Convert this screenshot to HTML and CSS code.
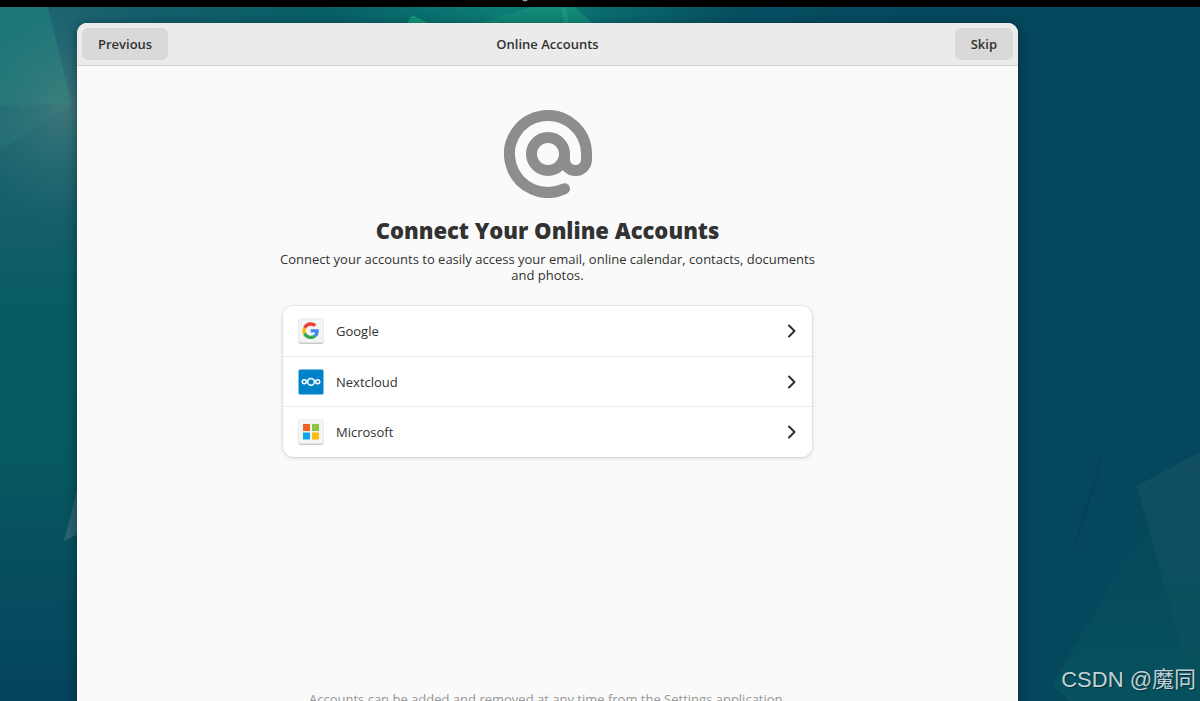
FILE: index.html
```
<!DOCTYPE html>
<html lang="en">
<head>
<meta charset="utf-8">
<title>Online Accounts</title>
<link rel="stylesheet" href="styles.css">
</head>

<body>
	<!-- desktop wallpaper -->
	<svg class="wallpaper" viewBox="0 0 1200 701" preserveAspectRatio="none" aria-hidden="true">
		<defs>
			<linearGradient id="base" x1="0" y1="0" x2="0" y2="1">
				<stop offset="0" stop-color="#1b6771"/>
				<stop offset="0.3" stop-color="#155f6b"/>
				<stop offset="0.45" stop-color="#075b65"/>
				<stop offset="0.65" stop-color="#075962"/>
				<stop offset="0.85" stop-color="#064c5f"/>
				<stop offset="1" stop-color="#05445c"/>
			</linearGradient>
			<linearGradient id="top" x1="0" y1="0" x2="1" y2="0">
				<stop offset="0" stop-color="#1b6070"/>
				<stop offset="0.3" stop-color="#075e67"/>
				<stop offset="0.5" stop-color="#0c7d76"/>
				<stop offset="0.6" stop-color="#0a6e70"/>
				<stop offset="0.75" stop-color="#065062"/>
				<stop offset="1" stop-color="#05475c"/>
			</linearGradient>
			<radialGradient id="glow" cx="70" cy="110" r="115" gradientUnits="userSpaceOnUse">
				<stop offset="0" stop-color="#5d8785" stop-opacity="0.55"/>
				<stop offset="1" stop-color="#3a7a7c" stop-opacity="0"/>
			</radialGradient>
			<linearGradient id="shard" x1="0" y1="0" x2="0" y2="1">
				<stop offset="0" stop-color="#124f62"/>
				<stop offset="1" stop-color="#07505e"/>
			</linearGradient>
			<linearGradient id="hill" x1="0" y1="0" x2="0" y2="1">
				<stop offset="0" stop-color="#05485c"/>
				<stop offset="1" stop-color="#06525f"/>
			</linearGradient>
		</defs>
		<rect width="600" height="701" fill="url(#base)"/>
		<rect x="600" width="600" height="701" fill="#05475d"/>
		<polygon points="46,0 960,0 960,60 72,105" fill="url(#top)"/>
		<polygon points="0,0 46,0 72,105 0,105" fill="#1c7677"/>
		<polygon points="0,105 72,105 0,150" fill="#1b6a72"/>
		<rect width="200" height="240" fill="url(#glow)"/>
		<polygon points="407,23 412,15 428,23" fill="#159579"/>
		<polygon points="480,23 530,7 575,7 592,23" fill="#118878"/>
		<polygon points="564,23 561,7 566,7 569,23" fill="#1b957f"/>
		<polygon points="64,541 78,487 78,534" fill="#2b6470"/>
		<polygon points="1112,424 1090,500 1062,592 1084,510" fill="#054259"/>
		<polygon points="1052,685 1143,530 1200,560 1200,701 1070,701" fill="url(#hill)"/>
		<polygon points="1137,486 1200,452 1200,701 1192,685" fill="url(#shard)"/>
	</svg>

	<div class="topbar">
		<svg class="clock-tail" viewBox="0 0 6 2" aria-hidden="true"><path d="M0.5 0 Q3 2 5.500 0" fill="none" stroke="#cccccc"/></svg>
	</div>

	<div class="window">
		<header class="headerbar">
			<button type="button" class="nav-btn">Previous</button>
			<h1 class="window-title">Online Accounts</h1>
			<button type="button" class="nav-btn">Skip</button>
		</header>

		<main class="page">
			<svg class="at-icon" viewBox="0 0 16 16" fill="none" stroke="#8d8d8d" stroke-width="2" stroke-linecap="round" aria-hidden="true">
				<circle cx="8" cy="8" r="3"/>
				<path d="M11 8v1a2 2 0 0 0 4 0v-1A7 7 0 1 0 11 14.320"/>
			</svg>
			<h2 class="title">Connect Your Online Accounts</h2>
			<p class="subtitle">Connect your accounts to easily access your email, online calendar, contacts, documents and photos.</p>

			<div class="accounts">
				<button type="button" class="account">
					<svg class="logo" viewBox="0 0 26 26" aria-hidden="true">
						<rect x="0.500" y="1" width="25" height="25" rx="2" fill="#c9c9c9"/>
						<rect x="0.500" y="0.500" width="25" height="24" rx="2" fill="#f4f4f4" stroke="#e6e6e6" stroke-width="0.500"/>
						<g transform="translate(4.300 4.300) scale(0.350)">
							<path fill="#ea4335" d="M24 9.500c3.540 0 6.710 1.220 9.210 3.600l6.850-6.850C35.900 2.380 30.470 0 24 0 14.620 0 6.510 5.380 2.560 13.220l7.980 6.190C12.430 13.720 17.740 9.500 24 9.500z"/>
							<path fill="#4285f4" d="M46.980 24.550c0-1.570-.15-3.090-.38-4.550H24v9.020h12.940c-.58 2.960-2.260 5.480-4.780 7.180l7.730 6c4.510-4.180 7.090-10.360 7.090-17.650z"/>
							<path fill="#fbbc05" d="M10.530 28.590c-.48-1.450-.76-2.990-.76-4.590s.27-3.140.76-4.590l-7.980-6.190C.92 16.460 0 20.120 0 24c0 3.880.92 7.540 2.560 10.780l7.970-6.190z"/>
							<path fill="#34a853" d="M24 48c6.480 0 11.930-2.130 15.890-5.810l-7.730-6c-2.150 1.450-4.920 2.300-8.160 2.300-6.260 0-11.570-4.220-13.470-9.910l-7.980 6.190C6.510 42.620 14.620 48 24 48z"/>
						</g>
					</svg>
					<span class="account-name">Google</span>
					<svg class="chevron" viewBox="0 0 10 14" aria-hidden="true"><path d="M2 1.500 7.500 7 2 12.500"/></svg>
				</button>
				<button type="button" class="account">
					<svg class="logo" viewBox="0 0 26 26" aria-hidden="true">
						<rect x="0.500" y="0.500" width="25" height="25" rx="1.500" fill="#0082c9"/>
						<g fill="none" stroke="#ffffff" stroke-width="1.500">
							<circle cx="13" cy="12.800" r="3.400"/>
							<circle cx="6.300" cy="12.800" r="2"/>
							<circle cx="19.700" cy="12.800" r="2"/>
						</g>
					</svg>
					<span class="account-name">Nextcloud</span>
					<svg class="chevron" viewBox="0 0 10 14" aria-hidden="true"><path d="M2 1.500 7.500 7 2 12.500"/></svg>
				</button>
				<button type="button" class="account">
					<svg class="logo" viewBox="0 0 26 26" aria-hidden="true">
						<rect x="0.500" y="1" width="25" height="25" rx="2" fill="#c9c9c9"/>
						<rect x="0.500" y="0.500" width="25" height="24" rx="2" fill="#f4f4f4" stroke="#e6e6e6" stroke-width="0.500"/>
						<rect x="5" y="5" width="7" height="7" fill="#ec6325"/>
						<rect x="14" y="5" width="7" height="7" fill="#8bc53f"/>
						<rect x="5" y="13.500" width="7" height="7" fill="#10a5e6"/>
						<rect x="14" y="13.500" width="7" height="7" fill="#fdbc12"/>
					</svg>
					<span class="account-name">Microsoft</span>
					<svg class="chevron" viewBox="0 0 10 14" aria-hidden="true"><path d="M2 1.500 7.500 7 2 12.500"/></svg>
				</button>
			</div>

			<p class="note">Accounts can be added and removed at any time from the Settings application.</p>
		</main>
	</div>

	<div class="watermark">CSDN @魔同</div>
</body>
</html>
```
FILE: styles.css
```
* {
	box-sizing: border-box;
}

body {
	margin: 0;
	height: 100vh;
	overflow: hidden;
	display: flex;
	flex-direction: column;
	position: relative;
	background-color: #05475d;
	font-family: "Open Sans", "Noto Sans", sans-serif;
	font-size: 13px;
	color: #323232;
}

.wallpaper {
	position: absolute;
	top: 0;
	left: 0;
	width: 100%;
	height: 100%;
	z-index: -1;
}

.topbar {
	flex: none;
	height: 7px;
	background-color: #000000;
	display: flex;
	justify-content: center;
	padding-right: 150px;
}

.clock-tail {
	width: 6px;
	height: 2px;
}

/* the window runs on below the bottom of the screen */
.window {
	flex: none;
	height: 100vh;
	margin: 16px 182px 0 77px;
	display: flex;
	flex-direction: column;
	background-color: #fafafa;
	border-radius: 10px;
	box-shadow: 0 2px 12px 1px rgba(0, 0, 0, 0.35);
	overflow: hidden;
}

.headerbar {
	flex: none;
	display: grid;
	grid-template-columns: 1fr auto 1fr;
	align-items: center;
	height: 43px;
	padding: 0 5px;
	background-color: #ebebeb;
	border-bottom: 1px solid #d5d5d5;
}

.window-title {
	margin: 0;
	font-size: 13px;
	font-weight: 600;
}

.nav-btn {
	justify-self: start;
	height: 32px;
	padding: 0 16px;
	border: none;
	border-radius: 6px;
	background-color: #d9d9d9;
	font-family: inherit;
	font-size: 13px;
	font-weight: 600;
	color: #323232;
}

.nav-btn:last-child {
	justify-self: end;
}

.nav-btn:hover {
	background-color: #cfcfcf;
}

.page {
	flex: 1;
	display: flex;
	flex-direction: column;
	align-items: center;
	padding: 44px 20px 17px;
}

.at-icon {
	flex: none;
	width: 88px;
	height: 88px;
}

.title {
	margin: 16px 0 5px;
	font-size: 22px;
	line-height: 32px;
	font-weight: 800;
}

.subtitle {
	max-width: 550px;
	margin: 0 0 23px;
	line-height: 16px;
	text-align: center;
}

.accounts {
	width: 100%;
	max-width: 529px;
	background-color: #ffffff;
	border-radius: 11px;
	box-shadow: 0 0 0 1px rgba(0, 0, 0, 0.04), 0 1px 4px rgba(0, 0, 0, 0.16);
	overflow: hidden;
}

.account {
	display: flex;
	align-items: center;
	gap: 12px;
	width: 100%;
	height: 50px;
	padding: 0 15px;
	border: none;
	border-bottom: 1px solid #ebebeb;
	background-color: #ffffff;
	font-family: inherit;
	font-size: 13px;
	color: #323232;
	text-align: left;
}

.account:first-child {
	height: 51px;
}

.account:last-child {
	border-bottom: none;
}

.account:hover {
	background-color: #f7f7f7;
}

.logo {
	flex: none;
	width: 26px;
	height: 26px;
}

.account-name {
	flex: 1;
}

.chevron {
	width: 10px;
	height: 14px;
	fill: none;
	stroke: #2e2e2e;
	stroke-width: 2;
	stroke-linecap: round;
	stroke-linejoin: round;
}

.note {
	margin: auto 0 0;
	line-height: 16px;
	color: #969696;
}

.watermark {
	position: absolute;
	right: 4px;
	bottom: 8px;
	font-family: "Liberation Sans", "Noto Sans CJK SC", sans-serif;
	font-size: 22px;
	line-height: 26px;
	color: #c3d0d6;
	text-shadow: 1px 1px 1px rgba(0, 0, 0, 0.4);
}
```
